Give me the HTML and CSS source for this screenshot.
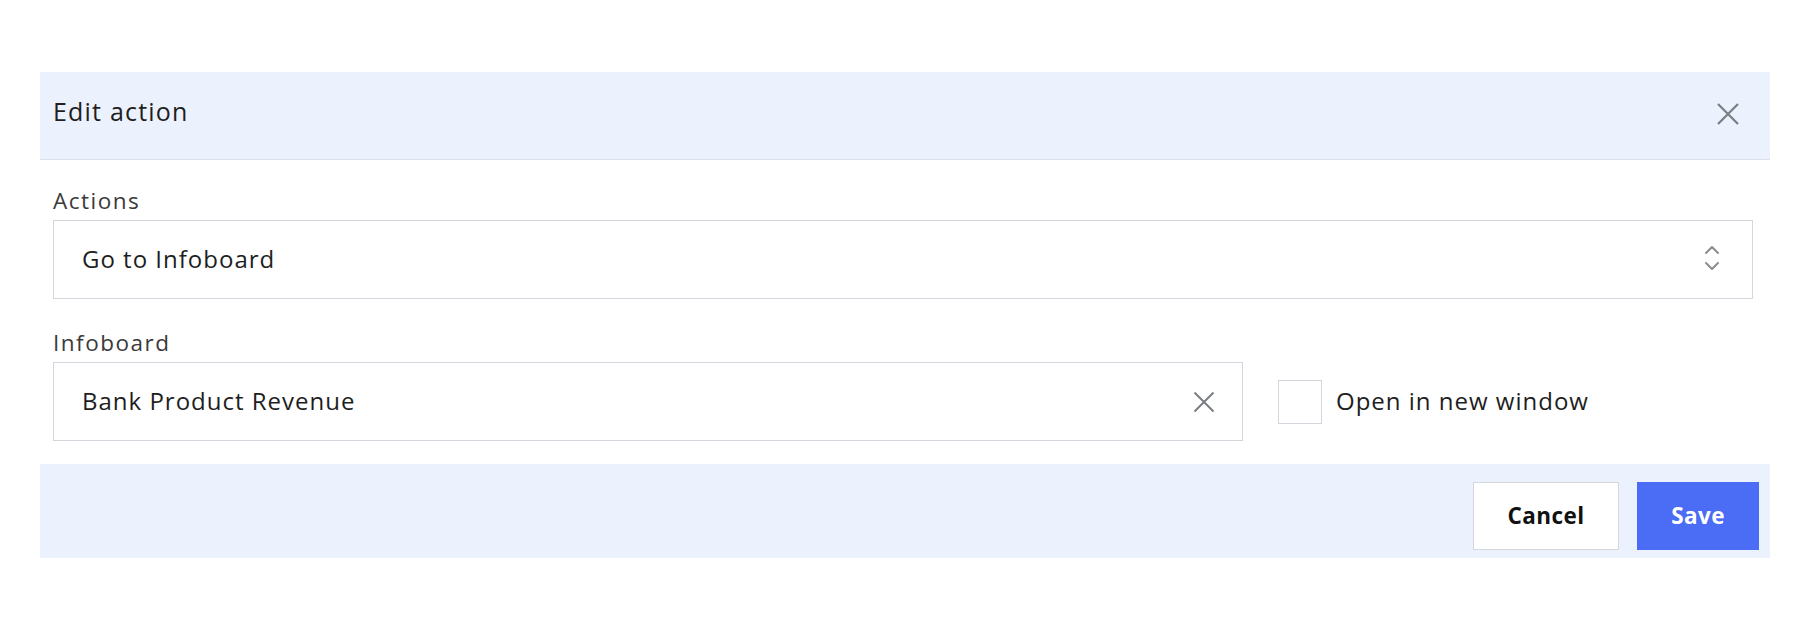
FILE: index.html
```html
<!DOCTYPE html>
<html>
<head>
<meta charset="utf-8">
<link rel="stylesheet" href="styles.css">
</head>
<body>
<div class="dialog">
  <div class="dialog-header">
    <span class="title">Edit action</span>
    <svg class="close" viewBox="0 0 24 24" width="24" height="24"><path d="M2 2 L22 22 M22 2 L2 22" stroke="#7a7d82" stroke-width="2.2" fill="none"/></svg>
  </div>
  <div class="dialog-body">
    <div class="field">
      <div class="label">Actions</div>
      <div class="select">
        <span>Go to Infoboard</span>
        <svg class="chev" viewBox="0 0 16 26" width="16" height="26"><path d="M2 8 L8 2 L14 8 M2 18 L8 24 L14 18" stroke="#8a8d92" stroke-width="2" fill="none" stroke-linecap="round" stroke-linejoin="round"/></svg>
      </div>
    </div>
    <div class="field">
      <div class="label">Infoboard</div>
      <div class="row">
        <div class="input">
          <span>Bank Product Revenue</span>
          <svg class="clear" viewBox="0 0 22 22" width="22" height="22"><path d="M1.5 1.5 L20.5 20.5 M20.5 1.5 L1.5 20.5" stroke="#7a7d82" stroke-width="2" fill="none"/></svg>
        </div>
        <label class="check">
          <span class="box"></span>
          <span class="check-text">Open in new window</span>
        </label>
      </div>
    </div>
  </div>
  <div class="dialog-footer">
    <button class="btn cancel">Cancel</button>
    <button class="btn save">Save</button>
  </div>
</div>
</body>
</html>
```
FILE: styles.css
```css
* { box-sizing: border-box; }
body {
  margin: 0;
  background: #ffffff;
  font-family: "Open Sans", "Liberation Sans", sans-serif;
  color: #222;
}
.dialog {
  margin: 72px 40px 0 40px;
  width: 1730px;
  background: #fff;
}
.dialog-header {
  height: 88px;
  background: #ebf1fd;
  border-bottom: 1px solid #dde2ea;
  display: flex;
  align-items: center;
  justify-content: space-between;
  padding: 0 30px 4px 13px;
}
.title {
  font-size: 25px;
  letter-spacing: 1.2px;
  color: #1e1e1e;
  padding-bottom: 6px;
}
.close { display: block; }
.dialog-body {
  padding: 26px 17px 23px 13px;
  display: flex;
  flex-direction: column;
  gap: 29px;
}
.label {
  font-size: 22.5px;
  letter-spacing: 1.5px;
  line-height: 30px;
  color: #3a3a3a;
  margin-bottom: 4px;
}
.select {
  height: 79px;
  border: 1.5px solid #d3d7dd;
  display: flex;
  align-items: center;
  justify-content: space-between;
  padding: 0 32px 3px 28px;
  font-size: 24px;
  letter-spacing: 1px;
  color: #1e1e1e;
}
.row {
  display: flex;
  align-items: center;
  gap: 35px;
}
.input {
  width: 1190px;
  height: 79px;
  border: 1.5px solid #d3d7dd;
  display: flex;
  align-items: center;
  justify-content: space-between;
  padding: 0 27px 3px 28px;
  font-size: 24px;
  letter-spacing: 1px;
  color: #1e1e1e;
}
.clear { display: block; margin-top: 3px; }
.check {
  display: flex;
  align-items: center;
  gap: 14px;
}
.box {
  width: 44px;
  height: 44px;
  border: 1.5px solid #d3d7dd;
  background: #fff;
}
.check-text {
  font-size: 24px;
  letter-spacing: 1px;
  color: #1e1e1e;
  padding-bottom: 2px;
}
.dialog-footer {
  height: 94px;
  background: #ebf1fd;
  display: flex;
  align-items: flex-start;
  justify-content: flex-end;
  gap: 18px;
  padding: 18px 11px 0 11px;
}
.btn {
  height: 68px;
  font-family: "Open Sans", "Liberation Sans", sans-serif;
  font-size: 22.5px;
  font-weight: 700;
  letter-spacing: 0.4px;
  border: 1.5px solid #d3d7dd;
  cursor: pointer;
  padding-bottom: 3px;
}
.cancel {
  width: 146px;
  background: #fff;
  color: #111;
}
.save {
  width: 122px;
  background: #4b6cf5;
  border-color: #4b6cf5;
  color: #fff;
}
```
